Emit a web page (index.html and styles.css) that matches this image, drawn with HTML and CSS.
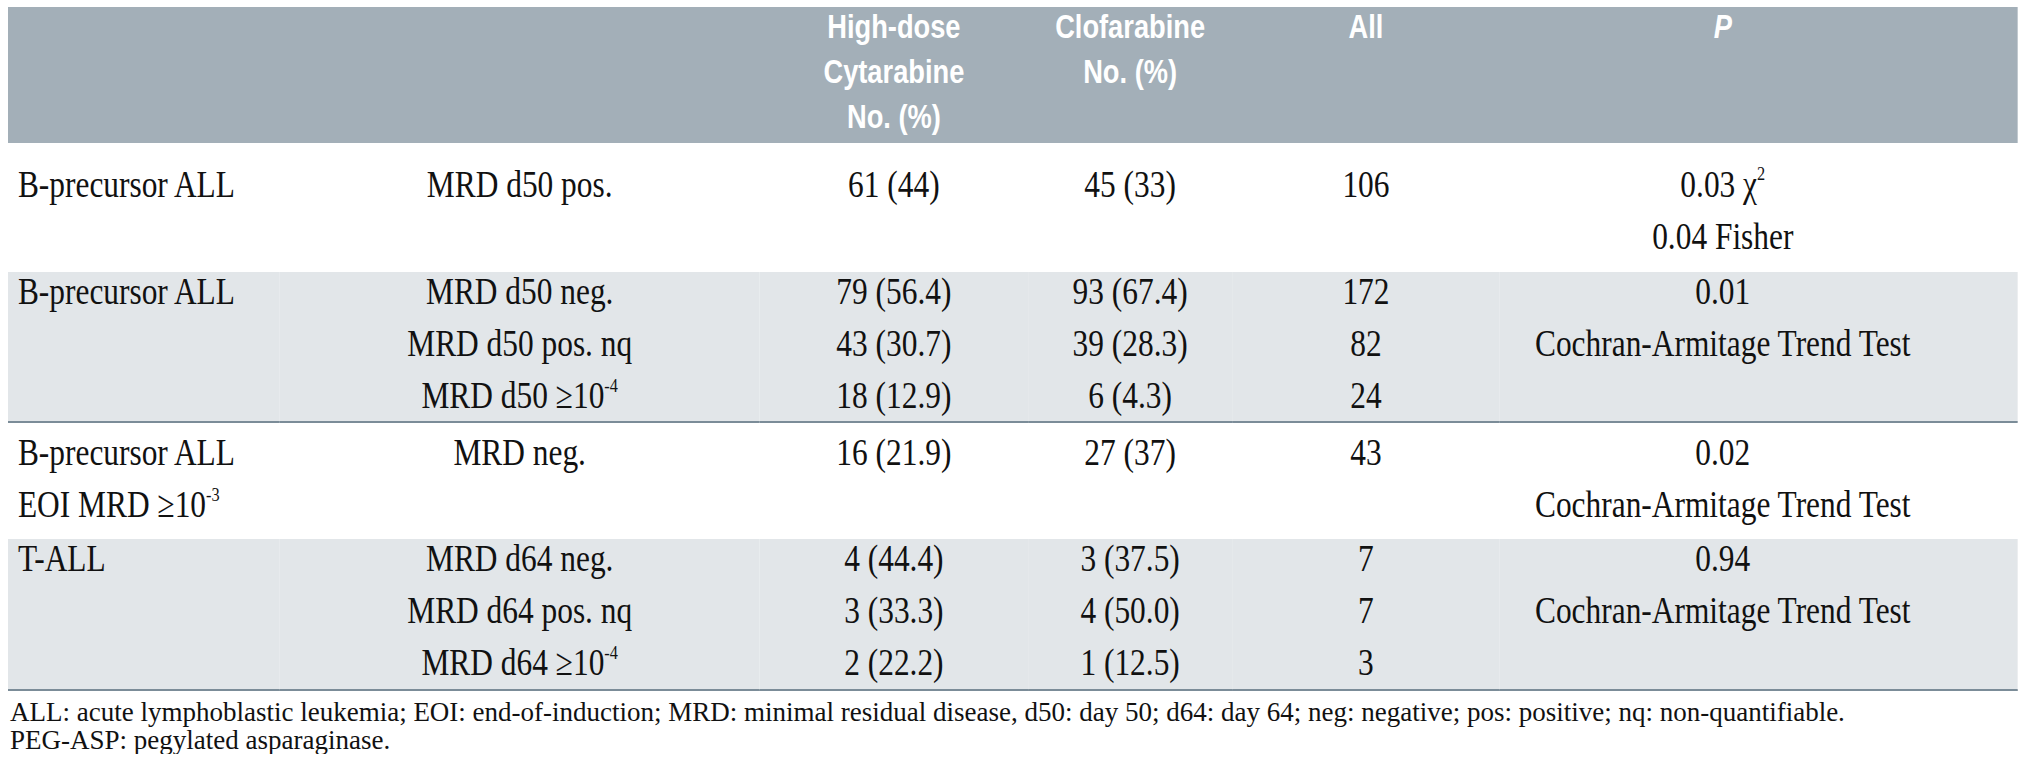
FILE: index.html
```html
<!DOCTYPE html>
<html lang="en">
<head>
<meta charset="utf-8">
<title>MRD by randomization arm</title>
<link rel="stylesheet" href="styles.css">
</head>
<body>
<div class="wrap">
  <div class="frame">
  <table class="tbl">
    <colgroup>
      <col class="c1"><col class="c2"><col class="c3"><col class="c4"><col class="c5"><col class="c6">
    </colgroup>
    <thead>
      <tr>
        <th></th>
        <th></th>
        <th><div class="hd">High-dose<br>Cytarabine<br>No. (%)</div></th>
        <th><div class="hd">Clofarabine<br>No. (%)</div></th>
        <th><div class="hd">All</div></th>
        <th class="pcol"><div class="hd"><i>P</i></div></th>
      </tr>
    </thead>
    <tbody class="g1">
      <tr>
        <td class="lab">B-precursor ALL</td>
        <td>MRD d50 pos.</td>
        <td>61 (44)</td>
        <td>45 (33)</td>
        <td>106</td>
        <td class="pcol">0.03 χ<sup class="sq">2</sup></td>
      </tr>
      <tr>
        <td class="lab"></td><td></td><td></td><td></td><td></td>
        <td class="pcol">0.04 Fisher</td>
      </tr>
    </tbody>
    <tbody class="g2 shade rule">
      <tr>
        <td class="lab">B-precursor ALL</td>
        <td>MRD d50 neg.</td>
        <td>79 (56.4)</td>
        <td>93 (67.4)</td>
        <td>172</td>
        <td class="pcol">0.01</td>
      </tr>
      <tr>
        <td class="lab"></td>
        <td>MRD d50 pos. nq</td>
        <td>43 (30.7)</td>
        <td>39 (28.3)</td>
        <td>82</td>
        <td class="pcol">Cochran-Armitage Trend Test</td>
      </tr>
      <tr>
        <td class="lab"></td>
        <td>MRD d50 ≥10<sup>-4</sup></td>
        <td>18 (12.9)</td>
        <td>6 (4.3)</td>
        <td>24</td>
        <td class="pcol"></td>
      </tr>
    </tbody>
    <tbody class="g3">
      <tr>
        <td class="lab">B-precursor ALL</td>
        <td>MRD neg.</td>
        <td>16 (21.9)</td>
        <td>27 (37)</td>
        <td>43</td>
        <td class="pcol">0.02</td>
      </tr>
      <tr>
        <td class="lab">EOI MRD ≥10<sup>-3</sup></td>
        <td></td><td></td><td></td><td></td>
        <td class="pcol">Cochran-Armitage Trend Test</td>
      </tr>
    </tbody>
    <tbody class="g4 shade rule">
      <tr>
        <td class="lab">T-ALL</td>
        <td>MRD d64 neg.</td>
        <td>4 (44.4)</td>
        <td>3 (37.5)</td>
        <td>7</td>
        <td class="pcol">0.94</td>
      </tr>
      <tr>
        <td class="lab"></td>
        <td>MRD d64 pos. nq</td>
        <td>3 (33.3)</td>
        <td>4 (50.0)</td>
        <td>7</td>
        <td class="pcol">Cochran-Armitage Trend Test</td>
      </tr>
      <tr>
        <td class="lab"></td>
        <td>MRD d64 ≥10<sup>-4</sup></td>
        <td>2 (22.2)</td>
        <td>1 (12.5)</td>
        <td>3</td>
        <td class="pcol"></td>
      </tr>
    </tbody>
  </table>
  </div>
  <div class="notes">
    <p>ALL: acute lymphoblastic leukemia; EOI: end-of-induction; MRD: minimal residual disease, d50: day 50; d64: day 64; neg: negative; pos: positive; nq: non-quantifiable.</p>
    <p>PEG-ASP: pegylated asparaginase.</p>
  </div>
</div>
</body>
</html>
```

FILE: styles.css
```css
* { box-sizing: border-box; }

html, body { background: #ffffff; }

body {
  margin: 0;
}

.wrap {
  padding: 7px 12px 0 8px;
}

/* The typeset table uses condensed faces; the frame narrows the table horizontally. */
.frame {
  width: 2010px;
  overflow: hidden;
}

.tbl {
  width: 2433px;
  border-collapse: collapse;
  table-layout: fixed;
  transform: scaleX(0.826);
  transform-origin: 0 0;
  font-family: "Liberation Serif", "Times New Roman", serif;
  font-size: 38px;
  color: #111111;
  background: linear-gradient(#a3afb8 0, #a3afb8 136px, transparent 136px);
}

.c1 { width: 329px; }
.c2 { width: 581px; }
.c3 { width: 325px; }
.c4 { width: 247px; }
.c5 { width: 324px; }
.c6 { width: 627px; }

.tbl thead th {
  color: #ffffff;
  font-family: "Liberation Sans", Arial, sans-serif;
  font-weight: bold;
  font-size: 33px;
  line-height: 45px;
  text-align: center;
  vertical-align: top;
  height: 136px;
  padding: 0;
}

.tbl thead th.pcol { padding-right: 87px; }

.hd { margin-top: -3px; }

.tbl td {
  line-height: 38px;
  padding: 14px 0 0 0;
  text-align: center;
  vertical-align: top;
  white-space: nowrap;
}

.tbl td.lab {
  text-align: left;
  padding-left: 12px;
}

.tbl td.pcol { padding-right: 87px; }

.shade { background: #e2e6e9; }

.rule { border-bottom: 2px solid #7b8c98; }

.g1 tr:first-child td { padding-top: 22px; }
.g1 tr:last-child td { padding-bottom: 17px; }

.g2 tr:first-child td { padding-top: 0; }
.g2 tr:last-child td { padding-bottom: 7px; }

.g3 tr:first-child td { padding-top: 10px; }
.g3 tr:last-child td { padding-bottom: 16px; }

.g4 tr:first-child td { padding-top: 0; }
.g4 tr:last-child td { padding-bottom: 8px; }

sup {
  font-size: 0.52em;
  line-height: 0;
  vertical-align: 0.8em;
}

sup.sq { vertical-align: 0.85em; }

.notes {
  margin-top: 7px;
  padding-left: 2px;
  font-family: "Liberation Serif", "Times New Roman", serif;
  font-size: 27px;
  line-height: 28px;
  color: #111111;
}

.notes p { margin: 0; }
```
